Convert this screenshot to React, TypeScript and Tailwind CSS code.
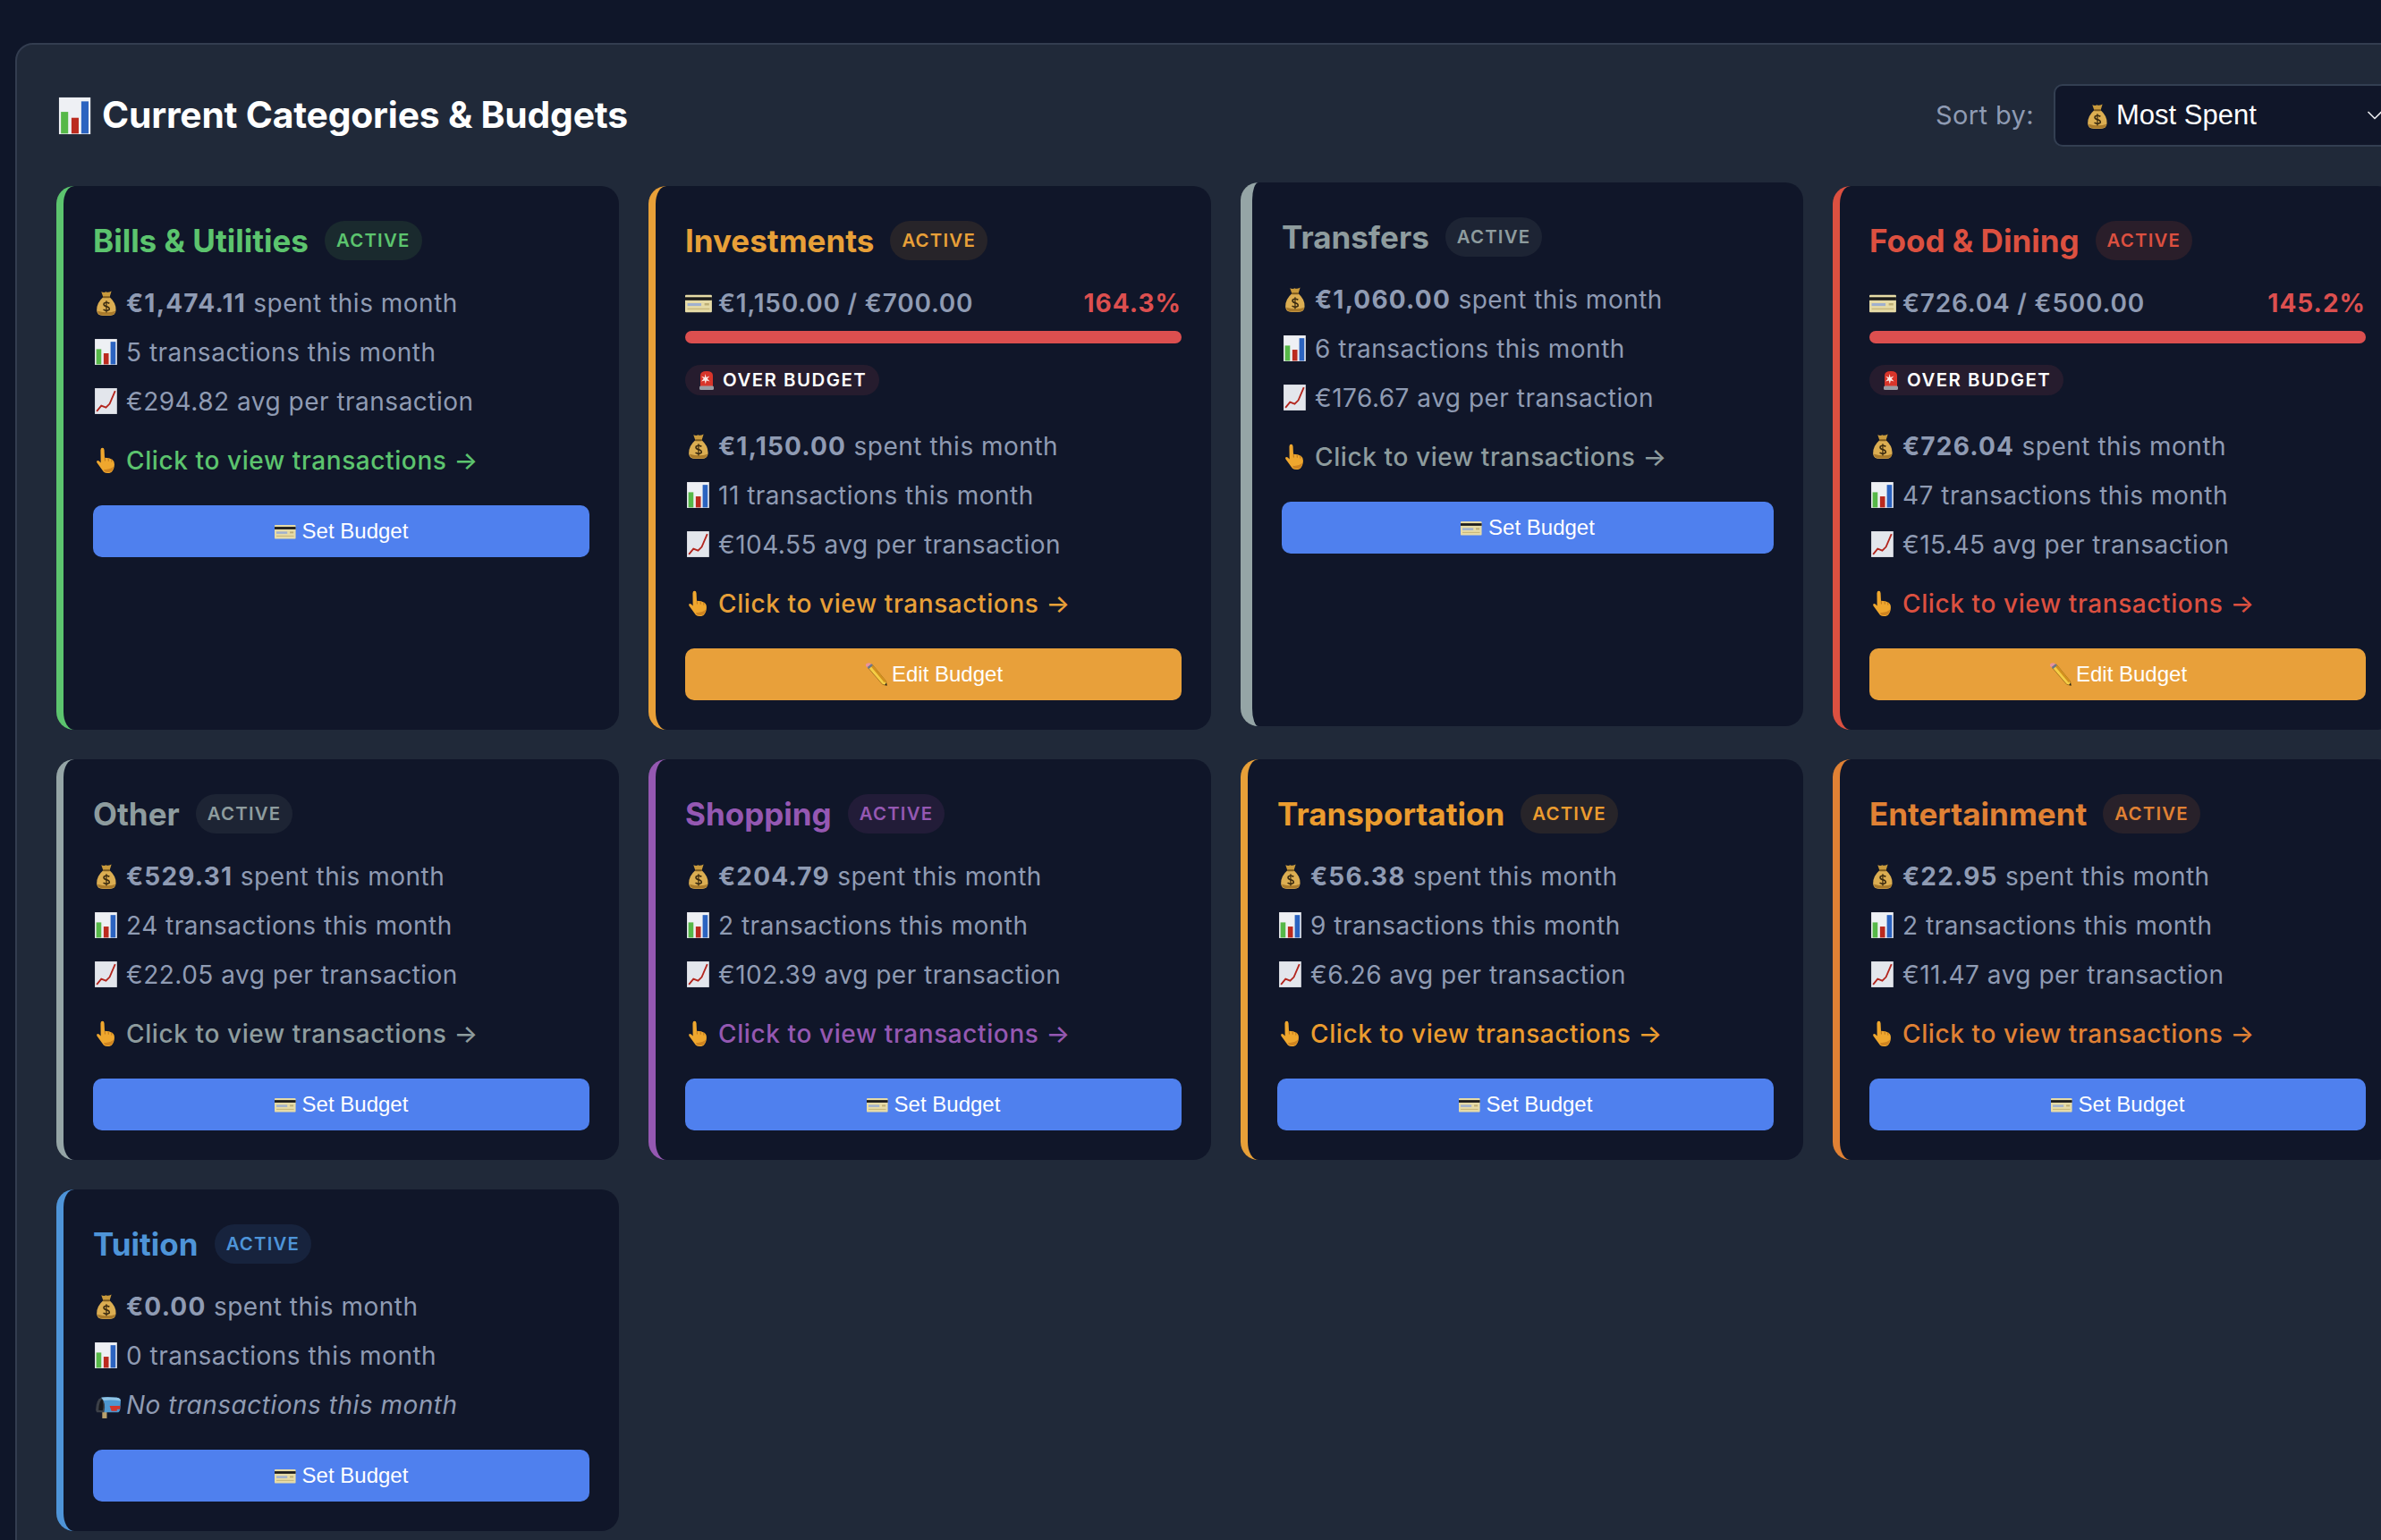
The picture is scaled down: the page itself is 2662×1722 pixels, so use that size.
import { ChevronDown } from 'lucide-react';

type EmojiName = 'bag' | 'bars' | 'trend' | 'hand' | 'card' | 'siren' | 'pencil' | 'mailbox';

const Emoji = ({ name, className }: { name: EmojiName; className: string }) => {
  if (name === 'bag') {
    return (
      <svg viewBox="0 0 32 32" className={className}>
        <path d="M9 4 Q12 5.5 14 4 Q16 5.5 20 3.5 L18 10 L11 10 Z" fill="#c99a3c" />
        <path d="M11 10 L18 10 Q25 16 24.8 24 Q24.5 30 18 30 L11 30 Q4 30 4 24 Q4 16 11 10 Z" fill="#dcae52" />
        <path d="M5 25 Q5 29.5 11 29.5 L18 29.5 Q24 29.5 24.4 25 Q16 28 5 25 Z" fill="#a97a2b" />
        <rect x="10.5" y="9" width="8" height="2" rx="1" fill="#7c5a1e" />
        <path d="M17.8 16.8 Q14.5 14.8 12 16.6 Q10.8 19 14.3 20 Q18.5 21 17.5 23.6 Q14.8 25.6 11.2 23.4" fill="none" stroke="#3a2a10" strokeWidth="1.6" />
        <path d="M14.5 13.8 L14.5 26.6" stroke="#3a2a10" strokeWidth="1.2" />
      </svg>
    );
  }
  if (name === 'bars') {
    return (
      <svg viewBox="0 0 32 32" className={className}>
        <rect x="2" y="2" width="24" height="28" fill="#eef0f4" />
        <rect x="3.5" y="13" width="5.5" height="16.5" fill="#56b848" />
        <rect x="11.5" y="17.5" width="5.5" height="12" fill="#bb2a1e" />
        <rect x="19" y="5" width="5.5" height="24.5" fill="#2b63c0" />
      </svg>
    );
  }
  if (name === 'trend') {
    return (
      <svg viewBox="0 0 32 32" className={className}>
        <rect x="2" y="2" width="24" height="28" fill="#e3e6ec" />
        <path d="M4 27 L9 21 L14 23 L18 19 L24 5" fill="none" stroke="#b3261e" strokeWidth="1.8" />
      </svg>
    );
  }
  if (name === 'hand') {
    return (
      <svg viewBox="0 0 32 32" className={className}>
        <path d="M8.2 5 Q8.4 2.6 10.2 2.6 Q12 2.6 12.2 5 L12.6 13.4 Q18 13.6 21 15.4 Q23.4 17 23.2 21 Q23 26 20 29 Q15 31.4 11.6 28.8 L8.4 24.6 L4.2 18.6 Q3.4 16.8 5 16.4 Q6.4 16.4 8.4 18.8 Z" fill="#efa72e" />
        <path d="M12.8 13.6 L13 17 M16.6 14 L16.8 17.2 M20.2 15 L20.2 18" stroke="#b8731a" strokeWidth="0.9" />
        <path d="M12 28 Q16 30 20 28.4 Q22 26 22.6 23 Q17 27 12 26 Z" fill="#cf8420" />
      </svg>
    );
  }
  if (name === 'card') {
    return (
      <svg viewBox="0 0 32 32" className={className}>
        <rect x="0" y="7.5" width="29" height="19" rx="1" fill="#e6dba6" />
        <rect x="0" y="10" width="29" height="3.4" fill="#1b1b1b" />
        <rect x="2.5" y="16.5" width="15" height="3" fill="#9fb0cf" />
        <rect x="21" y="16.5" width="5" height="2.4" fill="#bcae76" />
        <rect x="2.5" y="22" width="24" height="1.4" fill="#c9b97c" />
      </svg>
    );
  }
  if (name === 'siren') {
    return (
      <svg viewBox="0 0 24 24" className={className}>
        <path d="M4 7 Q4 2 11 2 Q18 2 18 7 L18 19 L4 19 Z" fill="#d8352a" />
        <rect x="3" y="18.5" width="16" height="4.5" rx="1.5" fill="#9a9ca3" />
        <path d="M9.5 5 L10.6 9 L14.4 7.4 L11.8 10.6 L14.6 13.4 L10.8 12.6 L9.8 16.6 L8.8 12.6 L5 13.6 L7.6 10.6 L5.2 7.8 L8.8 9 Z" fill="#fbe9e4" />
      </svg>
    );
  }
  if (name === 'pencil') {
    return (
      <svg viewBox="0 0 24 24" className={className}>
        <path d="M4.4 5.6 L8.6 2 L22.6 19 L23.6 23.6 L19 22.4 Z" fill="#f5cd45" stroke="#8a5a14" strokeWidth="0.6" />
        <path d="M8.6 2 L22.6 19 L21 20.6 L7 3.6 Z" fill="#d3901e" />
        <path d="M2 3.6 Q1.2 1.8 3 0.8 Q5.2 -0.4 6.6 0.8 L8.6 2 L4.4 5.6 Z" fill="#e8939e" />
        <path d="M3.4 4.6 L7.6 1.2 L9.2 2.8 L5 6.4 Z" fill="#6e7886" />
        <path d="M21.4 23 L23 20.8 L23.6 23.6 Z" fill="#1f1f1f" />
      </svg>
    );
  }
  return (
    <svg viewBox="0 0 32 32" className={className}>
      <rect x="10" y="24" width="5" height="7" fill="#b9a06a" />
      <path d="M3 22 Q3.5 10 9 8.5 L14 8 Q14 16 12 24.5 L4 24.5 Z" fill="#3c4048" />
      <path d="M6 22 Q6.5 12 10 10 Q12 16 10.4 22.5 Z" fill="#16181d" />
      <path d="M9 8.5 Q14 7.4 26 8.5 Q30 9 30 13 L29.4 21 Q29 24.5 26 24.5 L12 24.5 Q14.4 14 9 8.5 Z" fill="#4d97d0" />
      <path d="M9 8.5 Q14 7.4 26 8.5 Q30 9 30 12 Q20 10.6 11.6 11.6 Z" fill="#8fc4e6" />
      <path d="M18 17.5 L29.6 17.5 L29.2 21 L26 21 L26 23 L20 23 Z" fill="#d2352a" />
    </svg>
  );
};

const TONES = {
  green: { border: 'border-l-[#5cc46e]', text: 'text-[#5cc46e]', badge: 'bg-[#1a2a2e]' },
  amber: { border: 'border-l-[#e8a038]', text: 'text-[#e8a038]', badge: 'bg-[#272429]' },
  gray: { border: 'border-l-[#95a5a6]', text: 'text-[#8e9c9e]', badge: 'bg-[#1d2434]' },
  red: { border: 'border-l-[#dc5040]', text: 'text-[#dc5040]', badge: 'bg-[#2a1e2a]' },
  purple: { border: 'border-l-[#9558b2]', text: 'text-[#9558b2]', badge: 'bg-[#221c38]' },
  orange: { border: 'border-l-[#e8a038]', text: 'text-[#eb9c2f]', badge: 'bg-[#272429]' },
  carrot: { border: 'border-l-[#e08134]', text: 'text-[#e08134]', badge: 'bg-[#28212a]' },
  blue: { border: 'border-l-[#4e94d8]', text: 'text-[#4e94d8]', badge: 'bg-[#17233d]' },
};

type Category = {
  name: string;
  tone: keyof typeof TONES;
  spent: string;
  count: string;
  avg?: string;
  budget?: string;
  percent?: string;
  hovered?: boolean;
};

const CATEGORIES: Category[] = [
  { name: 'Bills & Utilities', tone: 'green', spent: '€1,474.11', count: '5', avg: '€294.82' },
  { name: 'Investments', tone: 'amber', spent: '€1,150.00', count: '11', avg: '€104.55', budget: '€1,150.00 / €700.00', percent: '164.3%' },
  { name: 'Transfers', tone: 'gray', spent: '€1,060.00', count: '6', avg: '€176.67', hovered: true },
  { name: 'Food & Dining', tone: 'red', spent: '€726.04', count: '47', avg: '€15.45', budget: '€726.04 / €500.00', percent: '145.2%' },
  { name: 'Other', tone: 'gray', spent: '€529.31', count: '24', avg: '€22.05' },
  { name: 'Shopping', tone: 'purple', spent: '€204.79', count: '2', avg: '€102.39' },
  { name: 'Transportation', tone: 'orange', spent: '€56.38', count: '9', avg: '€6.26' },
  { name: 'Entertainment', tone: 'carrot', spent: '€22.95', count: '2', avg: '€11.47' },
  { name: 'Tuition', tone: 'blue', spent: '€0.00', count: '0' },
];

const StatLine = ({ icon, children }: { icon: EmojiName; children: React.ReactNode }) => (
  <div className="flex h-[41px] items-center gap-[4px] text-[28px] tracking-[0.5px] text-[#8f9bb3]">
    <Emoji name={icon} className="h-[33px] w-[33px] shrink-0" />
    <span>{children}</span>
  </div>
);

const CategoryCard = ({ category }: { category: Category }) => {
  const tone = TONES[category.tone];
  const { hovered, budget, percent, avg } = category;

  return (
    <div
      className={`rounded-[20px] bg-[#101629] p-[33px] ${tone.border} ${
        hovered ? 'border-l-[13px] -translate-y-[4px]' : 'border-l-[8px]'
      }`}
    >
      <div className="flex h-[56px] items-center gap-[18px]">
        <h3 className={`text-[35px] font-bold ${tone.text}`}>{category.name}</h3>
        <span className={`flex h-[44px] items-center rounded-full px-[13px] text-[20.4px] font-semibold tracking-[1.2px] ${tone.text} ${tone.badge}`}>
          ACTIVE
        </span>
      </div>

      <div className="mt-[21px] flex flex-col">
        {budget && (
          <div className="mb-[35px]">
            <div className="flex h-[41px] items-center text-[28px] font-semibold">
              <Emoji name="card" className="mr-[4px] h-[33px] w-[33px] shrink-0" />
              <span className="tracking-[0.8px] text-[#8f9bb3]">{budget}</span>
              <span className="ml-auto font-bold tracking-[1px] text-[#dc4f4f]">{percent}</span>
            </div>
            <div className="mt-[11px] h-[14px] rounded-full bg-[#dc4f4f]" />
            <div className="mt-[24px] inline-flex h-[34px] items-center gap-[5px] rounded-full bg-[#261c2e] pl-[13px] pr-[14px] text-[20.4px] font-semibold tracking-[1.5px] text-white">
              <Emoji name="siren" className="h-[24px] w-[24px] shrink-0" />
              OVER BUDGET
            </div>
          </div>
        )}

        <div className="flex flex-col gap-[14px]">
          <StatLine icon="bag">
            <strong className="font-bold tracking-[1.2px]">{category.spent}</strong> spent this month
          </StatLine>
          <StatLine icon="bars">{category.count} transactions this month</StatLine>
          {avg ? (
            <StatLine icon="trend">{avg} avg per transaction</StatLine>
          ) : (
            <StatLine icon="mailbox">
              <em>No transactions this month</em>
            </StatLine>
          )}
        </div>

        {avg && (
          <div className={`mt-[25px] flex h-[41px] items-center gap-[4px] text-[28px] font-medium tracking-[0.6px] ${tone.text}`}>
            <Emoji name="hand" className="h-[33px] w-[33px] shrink-0" />
            <span>Click to view transactions →</span>
          </div>
        )}

        <button
          className={`mt-[30px] flex h-[58px] w-full items-center justify-center gap-[5px] rounded-[10px] font-['Liberation_Sans',sans-serif] text-[24px] text-white ${
            budget ? 'bg-[#e8a03a]' : 'bg-[#4f80ee]'
          }`}
        >
          <Emoji name={budget ? 'pencil' : 'card'} className="h-[26px] w-[26px] shrink-0" />
          {budget ? 'Edit Budget' : 'Set Budget'}
        </button>
      </div>
    </div>
  );
};

export default function App() {
  return (
    <div className="h-[1722px] w-[2662px] overflow-hidden bg-[#0f1629] pl-[17px] pt-[48px] font-['Inter',sans-serif]">
      <section className="min-h-[1800px] w-[2707px] rounded-tl-[20px] border-2 border-[#333d50] bg-[#202939] p-[44px]">
        <header className="mb-[44px] flex h-[70px] items-center justify-between">
          <h2 className="flex items-center gap-[4px] text-[40.8px] font-bold tracking-[-0.2px] text-white">
            <Emoji name="bars" className="h-[47px] w-[47px] shrink-0" />
            Current Categories &amp; Budgets
          </h2>
          <div className="flex items-center gap-[22px]">
            <span className="text-[29px] tracking-[0.4px] text-[#8f9bb3]">Sort by:</span>
            <div className="flex h-[70px] w-[382px] items-center rounded-[10px] border-2 border-[#333f52] bg-[#101629] pl-[32px] pr-[7px] font-['Liberation_Sans',sans-serif] text-[31px] text-white">
              <Emoji name="bag" className="mr-[3px] h-[33px] w-[33px] shrink-0" />
              Most Spent
              <ChevronDown className="ml-auto h-[28px] w-[28px] text-[#e5e7eb]" strokeWidth={1.5} />
            </div>
          </div>
        </header>

        <div className="grid grid-cols-[repeat(4,629px)] gap-x-[33px] gap-y-[33px]">
          {CATEGORIES.map((category) => (
            <CategoryCard key={category.name} category={category} />
          ))}
        </div>
      </section>
    </div>
  );
}
